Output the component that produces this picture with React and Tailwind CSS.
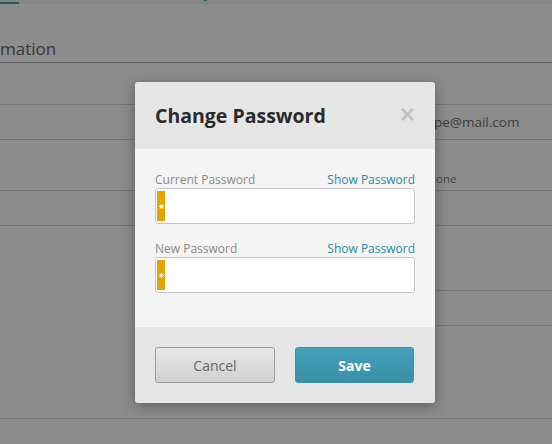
export default function App() {
    return (
        <div className="relative w-[552px] h-[444px] overflow-hidden bg-white" style={{ fontFamily: '"Open Sans", "Liberation Sans", sans-serif' }}>
            {/* Page behind the dialog */}
            <div className="h-[4px] bg-[#f2f2f2] relative">
                <div className="absolute left-0 bottom-0 w-[19px] h-[2px] bg-[#38a4c1]" />
                <div className="absolute left-[204px] top-0 w-[3px] h-[1px] bg-[#38a4c1]" />
            </div>
            <div className="h-[59px] flex items-center border-b border-[#aaaaaa]">
                <span className="text-[17px] text-[#6a6a6a] pt-[30px] leading-none">mation</span>
            </div>
            <div className="h-[42px] border-b border-[#d2d2d2]" />
            <div className="h-[35px] border-b border-[#d2d2d2] flex items-center">
                <span className="ml-[434px] text-[13.5px] text-[#707070]">pe@mail.com</span>
            </div>
            <div className="h-[51px] border-b border-[#d2d2d2] flex items-end pb-[3px]">
                <span className="ml-[422px] text-[11.5px] text-[#777]">Phone</span>
            </div>
            <div className="h-[35px] border-b border-[#d2d2d2] bg-[#fbfbfb]" />
            <div className="flex">
                <div className="w-[435px] h-[193px] border-b border-[#d2d2d2]" />
                <div className="flex-1">
                    <div className="h-[65px] border-b border-[#d2d2d2]" />
                    <div className="h-[35px] border-b border-[#d2d2d2]" />
                    <div className="h-[93px] border-b border-[#d2d2d2]" />
                </div>
            </div>

            {/* Overlay */}
            <div className="absolute inset-0 bg-black/45" />

            {/* Dialog */}
            <div className="absolute left-[135px] top-[82px] w-[300px] rounded-[3px] overflow-hidden shadow-[0_3px_14px_rgba(0,0,0,0.35)]">
                <div className="h-[67px] bg-[#e6e5e6] flex items-center justify-between pl-[20px] pr-[20px]">
                    <h2 className="text-[19.5px] font-bold text-[#2b2b2b]">Change Password</h2>
                    <svg width="15" height="15" viewBox="0 0 15 15" className="mt-[-2px]">
                        <path d="M2 2 L13 13 M13 2 L2 13" stroke="#c2c2c2" strokeWidth="3" />
                    </svg>
                </div>

                <div className="bg-[#f4f4f4] px-[20px] pt-[23px] pb-[34px]">
                    <PasswordField label="Current Password" />
                    <div className="h-[17px]" />
                    <PasswordField label="New Password" />
                </div>

                <div className="bg-[#e6e5e6] px-[20px] py-[20px] flex gap-[20px]">
                    <button className="w-[120px] h-[36px] rounded-[3px] border border-[#9c9c9c] bg-gradient-to-b from-[#e6e6e6] to-[#d1d1d1] text-[14px] text-[#666]">
                        Cancel
                    </button>
                    <button className="w-[119px] h-[36px] rounded-[3px] border border-[#3a93aa] bg-gradient-to-b from-[#43a1b9] to-[#3790a8] text-[14px] font-bold text-white">
                        Save
                    </button>
                </div>
            </div>
        </div>
    );
}

function PasswordField({ label }) {
    return (
        <div>
            <div className="h-[16px] flex items-center justify-between text-[12px] leading-none">
                <span className="text-[#8a8a8a]">{label}</span>
                <span className="text-[#2b8aa5]">Show Password</span>
            </div>
            <div className="h-[36px] bg-white border border-[#c4c4c4] rounded-[3px] pl-[1px] py-[2px] flex">
                <div className="w-[8px] bg-[#e5a300] flex items-center justify-center">
                    <svg width="5" height="5" viewBox="0 0 5 5">
                        <path d="M2.5 0 V5 M0 2.5 H5 M0.7 0.7 L4.3 4.3 M4.3 0.7 L0.7 4.3" stroke="white" strokeWidth="1" />
                    </svg>
                </div>
            </div>
        </div>
    );
}
